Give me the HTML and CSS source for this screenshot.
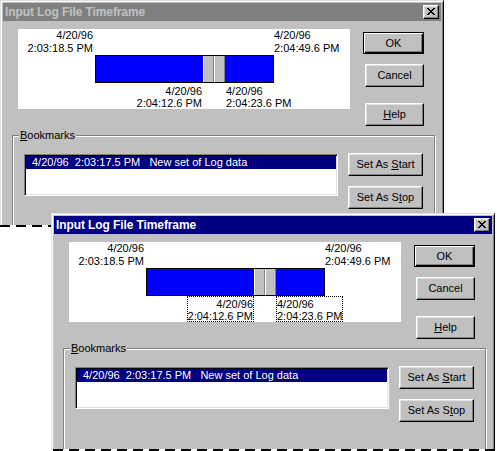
FILE: index.html
```html
<!DOCTYPE html>
<html>
<head>
<meta charset="utf-8">
<title>Input Log File Timeframe</title>
<link rel="stylesheet" href="styles.css">
</head>
<body>
<div class="desk">
  <div class="shot shot-back">
    <div class="dlg dlg-inactive">
      <div class="titlebar">
        <span class="title">Input Log File Timeframe</span>
        <span class="close"><svg width="8" height="7" viewBox="0 0 8 7" shape-rendering="crispEdges"><path d="M0 0h2v1h-2zM6 0h2v1h-2zM1 1h2v1h-2zM5 1h2v1h-2zM2 2h4v1h-4zM3 3h2v1h-2zM2 4h4v1h-4zM1 5h2v1h-2zM5 5h2v1h-2zM0 6h2v1h-2zM6 6h2v1h-2z" fill="#000"/></svg></span>
      </div>
      <div class="dlg-body">
        <div class="top-row">
          <div class="timeline">
            <div class="stamp stamp-begin">4/20/96<br>2:03:18.5 PM</div>
            <div class="stamp stamp-end">4/20/96<br>2:04:49.6 PM</div>
            <div class="track"><div class="thumb"><span class="thumb-half"></span><span class="thumb-half"></span></div></div>
            <div class="marks">
              <div class="mark mark-start">4/20/96<br>2:04:12.6 PM</div>
              <div class="mark mark-stop">4/20/96<br>2:04:23.6 PM</div>
            </div>
          </div>
          <div class="btn-col">
            <button class="btn btn-default">OK</button>
            <button class="btn btn-cancel">Cancel</button>
            <button class="btn btn-help"><u>H</u>elp</button>
          </div>
        </div>
        <fieldset class="group">
          <legend class="group-label"><u>B</u>ookmarks</legend>
          <div class="group-row">
            <div class="list"><div class="list-item">4/20/96  2:03:17.5 PM   New set of Log data</div></div>
            <div class="btn-col2">
              <button class="btn btn-wide"><span>Set As <u>S</u>tart</span></button>
              <button class="btn btn-wide"><span>Set As S<u>t</u>op</span></button>
            </div>
          </div>
        </fieldset>
      </div>
    </div>
  </div>
  <div class="cut cut-back"></div>

  <div class="shot shot-front">
    <div class="dlg dlg-active">
      <div class="titlebar">
        <span class="title">Input Log File Timeframe</span>
        <span class="close"><svg width="8" height="7" viewBox="0 0 8 7" shape-rendering="crispEdges"><path d="M0 0h2v1h-2zM6 0h2v1h-2zM1 1h2v1h-2zM5 1h2v1h-2zM2 2h4v1h-4zM3 3h2v1h-2zM2 4h4v1h-4zM1 5h2v1h-2zM5 5h2v1h-2zM0 6h2v1h-2zM6 6h2v1h-2z" fill="#000"/></svg></span>
      </div>
      <div class="dlg-body">
        <div class="top-row">
          <div class="timeline">
            <div class="stamp stamp-begin">4/20/96<br>2:03:18.5 PM</div>
            <div class="stamp stamp-end">4/20/96<br>2:04:49.6 PM</div>
            <div class="track"><div class="thumb"><span class="thumb-half"></span><span class="thumb-half"></span></div></div>
            <div class="marks">
              <div class="mark mark-start focus">4/20/96<br>2:04:12.6 PM</div>
              <div class="mark mark-stop focus">4/20/96<br>2:04:23.6 PM</div>
            </div>
          </div>
          <div class="btn-col">
            <button class="btn btn-default">OK</button>
            <button class="btn btn-cancel">Cancel</button>
            <button class="btn btn-help"><u>H</u>elp</button>
          </div>
        </div>
        <fieldset class="group">
          <legend class="group-label"><u>B</u>ookmarks</legend>
          <div class="group-row">
            <div class="list"><div class="list-item">4/20/96  2:03:17.5 PM   New set of Log data</div></div>
            <div class="btn-col2">
              <button class="btn btn-wide"><span>Set As <u>S</u>tart</span></button>
              <button class="btn btn-wide"><span>Set As S<u>t</u>op</span></button>
            </div>
          </div>
        </fieldset>
      </div>
    </div>
  </div>
  <div class="cut cut-front"></div>
</div>
</body>
</html>
```
FILE: styles.css
```css
* { box-sizing: border-box; }
html, body { margin: 0; padding: 0; background: #fff; }
body {
  width: 497px; height: 451px; overflow: hidden;
  font: 11px/13px "Liberation Sans", Arial, sans-serif; color: #000;
}
.desk { position: relative; width: 497px; height: 451px; }

.shot { position: absolute; overflow: hidden; }
.shot-back { left: 0; top: 0; width: 445px; height: 225px; }
.shot-front { left: 51px; top: 213px; width: 446px; height: 236px; }

.cut {
  position: absolute; height: 2px;
  background: repeating-linear-gradient(90deg, #000 0 10px, transparent 10px 16px);
}
.cut-back { left: 0; top: 225px; width: 445px; }
.cut-front { left: 53px; top: 449px; width: 444px; }

.dlg {
  width: 444px; height: 300px; background: #c0c0c0;
  border: 1px solid; border-color: #dfdfdf #000 #000 #dfdfdf;
  box-shadow: inset 1px 1px #fff, inset -1px -1px #808080;
  padding: 2px;
  display: flex; flex-direction: column;
}

.titlebar {
  height: 18px; display: flex; align-items: center; justify-content: space-between;
  padding: 0 2px 0 2px;
}
.dlg-inactive .titlebar { background: #808080; color: #c0c0c0; }
.dlg-active .titlebar { background: #000080; color: #fff; }
.title { font-weight: bold; font-size: 12px; letter-spacing: -0.1px; }

.close {
  width: 16px; height: 14px; display: flex; align-items: center; justify-content: center;
  background: #c0c0c0; border: 1px solid; border-color: #fff #000 #000 #fff;
  box-shadow: inset -1px -1px #808080, inset 1px 1px #dfdfdf;
  padding: 0 1px 1px 0;
}
.close svg { display: block; }

.dlg-body { display: flex; flex-direction: column; }

.top-row { display: flex; margin: 8px 0 0 15px; gap: 13px; }

.timeline {
  width: 332px; height: 80px; background: #fff;
  display: grid; grid-template-columns: 77px 179px 1fr; grid-template-rows: 26px 28px 26px;
}
.stamp { white-space: nowrap; line-height: 13px; }
.stamp-begin { grid-column: 1; grid-row: 1; text-align: right; padding-right: 2px; }
.stamp-end { grid-column: 3; grid-row: 1; }

.track {
  grid-column: 2; grid-row: 2; background: #00f; border: 1px solid #000; position: relative;
}
.thumb { position: absolute; left: 107px; top: 0; bottom: 0; display: flex; }
.thumb-half {
  width: 11px; background: #c0c0c0;
  border-left: 1px solid #fff; border-right: 1px solid #808080;
}

.marks {
  grid-column: 2 / 4; grid-row: 3;
  display: grid; grid-template-columns: 108px 22px max-content; align-items: start;
}
.mark {
  height: 26px; padding-top: 1px; line-height: 12px; white-space: nowrap;
  border: 1px dotted transparent;
}
.mark-start { grid-column: 1; justify-self: end; text-align: right; }
.mark-stop { grid-column: 3; justify-self: start; }
.mark.focus { border-color: #000; }

.btn {
  font: 11px/13px "Liberation Sans", Arial, sans-serif; color: #000;
  background: #c0c0c0; padding: 0; margin: 0;
  border: 1px solid; border-color: #fff #000 #000 #fff;
  box-shadow: inset -1px -1px #808080, inset 1px 1px #dfdfdf;
  text-align: center; white-space: pre;
}
.btn u { text-decoration: underline; text-underline-offset: 1px; }

.btn-col { display: flex; flex-direction: column; align-items: flex-end; width: 61px; }
.btn-default {
  width: 61px; height: 22px; margin-top: 3px;
  border: 1px solid #000;
  box-shadow: inset 1px 1px #fff, inset -1px -1px #000, inset -2px -2px #808080;
}
.btn-cancel { width: 59px; height: 23px; margin-top: 10px; }
.btn-help { width: 59px; height: 23px; margin-top: 16px; }

.group {
  margin: 3px 0 0 9px; width: 423px; min-inline-size: 0;
  border: 1px solid #808080;
  box-shadow: inset 1px 1px #fff, 1px 1px #fff;
  padding: 11px 11px 60px 11px;
}
.group-label { padding: 0 1px; margin-left: -5px; line-height: 13px; background: #c0c0c0; }

.group-row { display: flex; gap: 10px; }
.list {
  width: 314px; height: 42px; margin-top: 1px; background: #fff;
  border: 1px solid; border-color: #808080 #fff #fff #808080;
  box-shadow: inset 1px 1px #000, inset -1px -1px #dfdfdf;
  padding: 1px;
}
.list-item {
  background: #000080; color: #fff; height: 13px; line-height: 13px;
  padding-left: 6px; white-space: pre;
}
.btn-col2 { display: flex; flex-direction: column; gap: 10px; }
.btn-wide { width: 75px; height: 23px; }
```
